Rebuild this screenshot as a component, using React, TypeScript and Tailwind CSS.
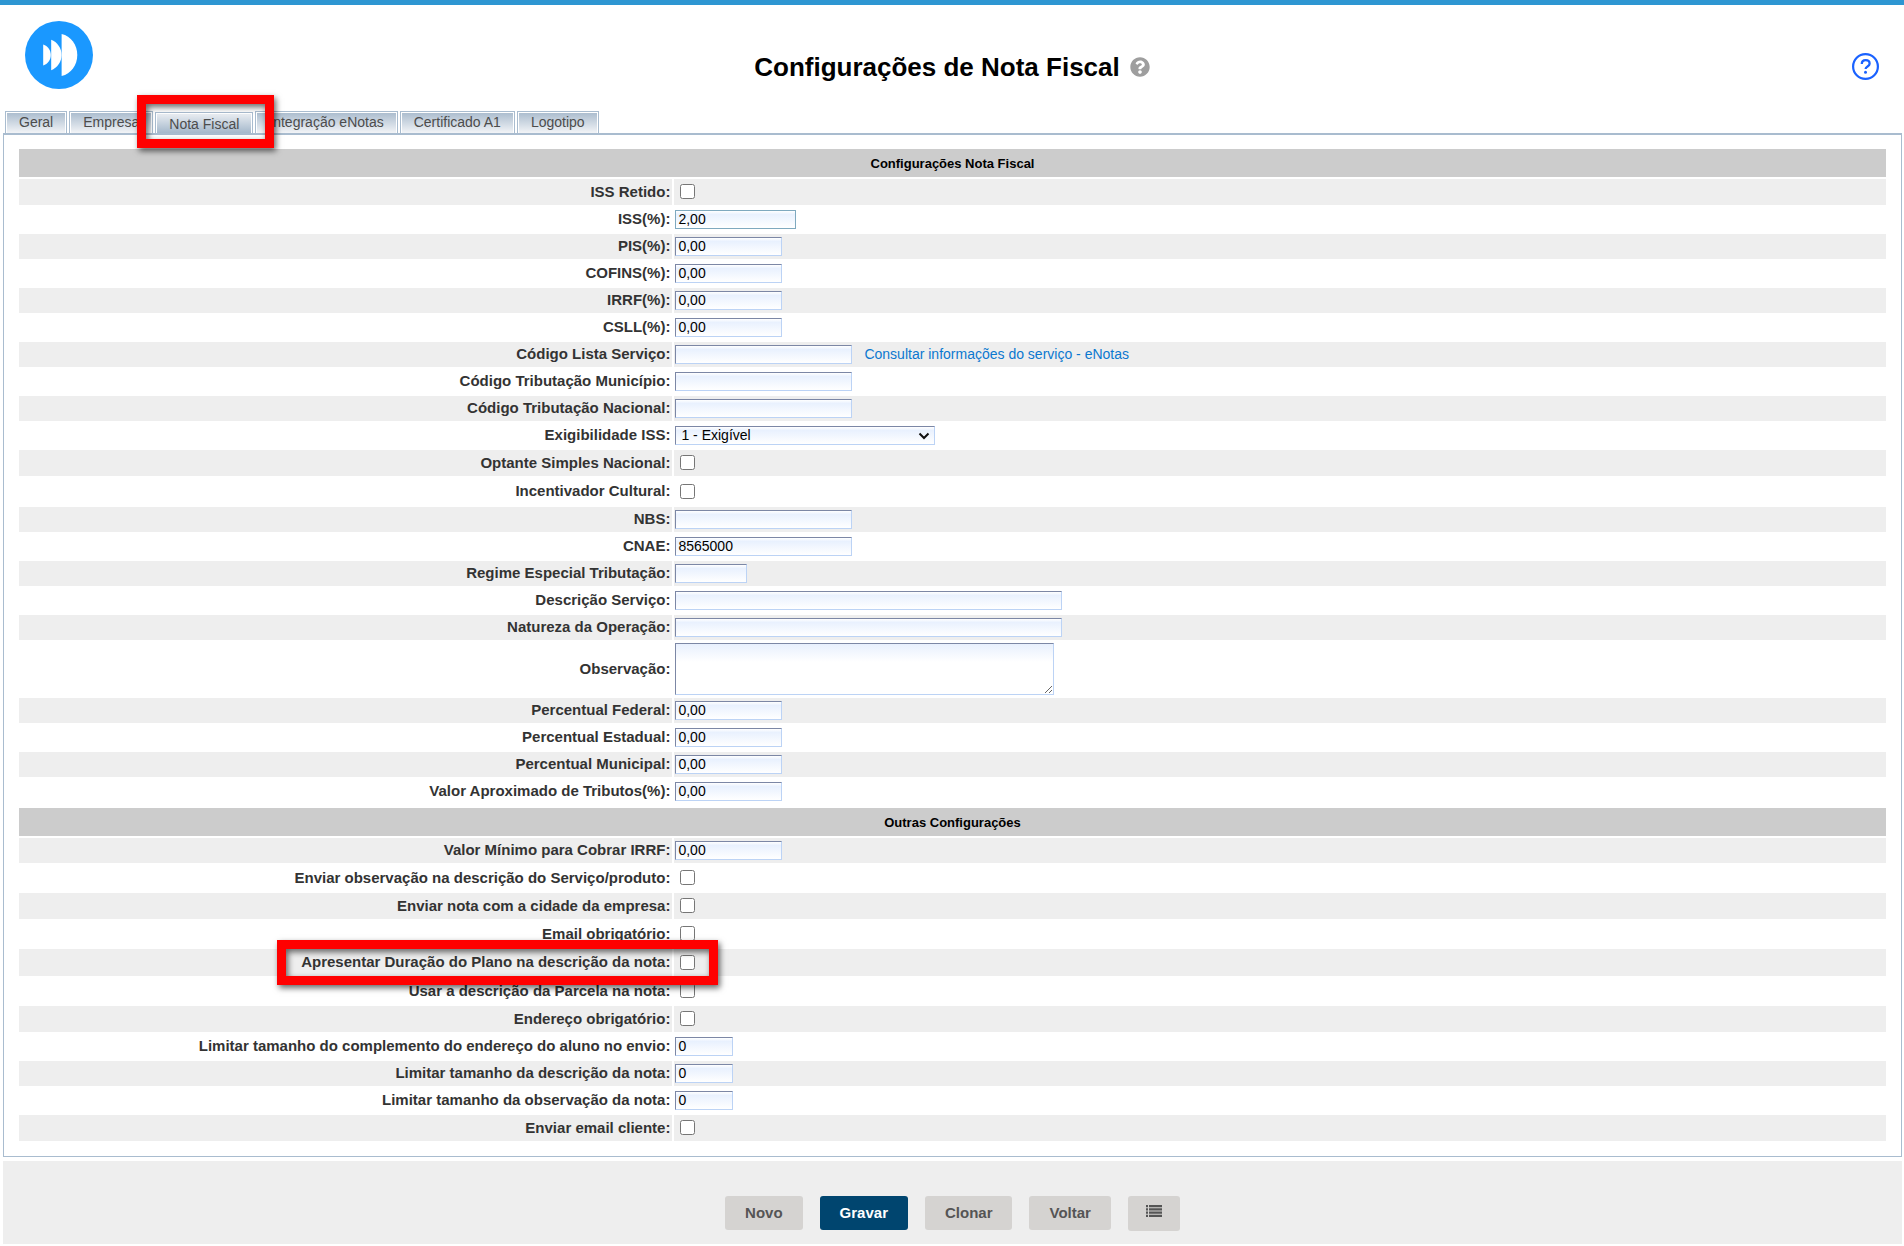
import { FaQuestionCircle } from "react-icons/fa";

interface Field {
  id: string;
  label: string;
  type: "text" | "checkbox" | "select" | "textarea";
  width?: string;
  value?: string;
  focused?: boolean;
  marked?: boolean;
  link?: string;
  rowHeight?: string;
}

const SHORT = "w-[107px]";
const MEDIUM = "w-[177px]";
const LONG = "w-[387px]";
const TINY = "w-[58px]";

const tabs = ["Geral", "Empresa", "Nota Fiscal", "Integração eNotas", "Certificado A1", "Logotipo"];

const notaFields: Field[] = [
  { id: "issRetido", label: "ISS Retido:", type: "checkbox" },
  { id: "iss", label: "ISS(%):", type: "text", width: "w-[121px]", value: "2,00", focused: true },
  { id: "pis", label: "PIS(%):", type: "text", width: SHORT, value: "0,00" },
  { id: "cofins", label: "COFINS(%):", type: "text", width: SHORT, value: "0,00" },
  { id: "irrf", label: "IRRF(%):", type: "text", width: SHORT, value: "0,00" },
  { id: "csll", label: "CSLL(%):", type: "text", width: SHORT, value: "0,00" },
  {
    id: "codigoLista",
    label: "Código Lista Serviço:",
    type: "text",
    width: MEDIUM,
    link: "Consultar informações do serviço - eNotas",
  },
  { id: "tribMunicipio", label: "Código Tributação Município:", type: "text", width: MEDIUM },
  { id: "tribNacional", label: "Código Tributação Nacional:", type: "text", width: MEDIUM },
  { id: "exigibilidade", label: "Exigibilidade ISS:", type: "select", value: "1 - Exigível" },
  { id: "simples", label: "Optante Simples Nacional:", type: "checkbox" },
  { id: "cultural", label: "Incentivador Cultural:", type: "checkbox", rowHeight: "h-[27px]" },
  { id: "nbs", label: "NBS:", type: "text", width: MEDIUM },
  { id: "cnae", label: "CNAE:", type: "text", width: MEDIUM, value: "8565000" },
  { id: "regime", label: "Regime Especial Tributação:", type: "text", width: "w-[72px]" },
  { id: "descricao", label: "Descrição Serviço:", type: "text", width: LONG },
  { id: "natureza", label: "Natureza da Operação:", type: "text", width: LONG },
  { id: "observacao", label: "Observação:", type: "textarea", rowHeight: "h-[54px]" },
  { id: "federal", label: "Percentual Federal:", type: "text", width: SHORT, value: "0,00" },
  { id: "estadual", label: "Percentual Estadual:", type: "text", width: SHORT, value: "0,00" },
  { id: "municipal", label: "Percentual Municipal:", type: "text", width: SHORT, value: "0,00" },
  { id: "tributos", label: "Valor Aproximado de Tributos(%):", type: "text", width: SHORT, value: "0,00" },
];

const outrasFields: Field[] = [
  { id: "minimoIrrf", label: "Valor Mínimo para Cobrar IRRF:", type: "text", width: SHORT, value: "0,00" },
  { id: "enviarObs", label: "Enviar observação na descrição do Serviço/produto:", type: "checkbox" },
  { id: "cidade", label: "Enviar nota com a cidade da empresa:", type: "checkbox" },
  { id: "email", label: "Email obrigatório:", type: "checkbox" },
  {
    id: "duracao",
    label: "Apresentar Duração do Plano na descrição da nota:",
    type: "checkbox",
    marked: true,
    rowHeight: "h-[27px]",
  },
  { id: "parcela", label: "Usar a descrição da Parcela na nota:", type: "checkbox" },
  { id: "endereco", label: "Endereço obrigatório:", type: "checkbox" },
  { id: "limComplemento", label: "Limitar tamanho do complemento do endereço do aluno no envio:", type: "text", width: TINY, value: "0" },
  { id: "limDescricao", label: "Limitar tamanho da descrição da nota:", type: "text", width: TINY, value: "0" },
  { id: "limObservacao", label: "Limitar tamanho da observação da nota:", type: "text", width: TINY, value: "0" },
  { id: "emailCliente", label: "Enviar email cliente:", type: "checkbox" },
];

const BOX = "border border-t-[#7c87a5] border-l-[#7c87a5] border-r-[#bcd3f5] border-b-[#bcd3f5] text-sm text-black outline-none";
const BOX_FILL = "bg-linear-to-b from-white via-[#e9f1fe] via-20% to-white";

function Logo() {
  return (
    <svg className="size-[68px]" viewBox="0 0 68 68" aria-hidden="true">
      <circle cx="34" cy="34" r="34" fill="#1a98ff" />
      <path d="M18.200 23.500c4.600 1.500 7.600 5.800 7.600 10.500s-3 9-7.600 10.500z" fill="#fff" />
      <path d="M26.200 18.800c6 2.200 10.400 8.400 10.400 15.200s-4.400 13-10.400 15.200z" fill="#fff" />
      <path d="M36.600 13c9.400 2.200 15.700 11 15.700 21s-6.300 18.800-15.700 21z" fill="#fff" />
    </svg>
  );
}

function HelpIcon() {
  return (
    <svg className="size-[27px]" viewBox="0 0 27 27" fill="none" stroke="#1a62ff" aria-hidden="true">
      <circle cx="13.500" cy="13.500" r="12.400" strokeWidth="2.200" />
      <path d="M9.800 11c0-2.300 1.600-3.800 3.900-3.800s3.900 1.400 3.900 3.500c0 2.800-4 2.700-4 5.300" strokeWidth="2.300" />
      <circle cx="13.500" cy="19.300" r="1.500" fill="#1a62ff" stroke="none" />
    </svg>
  );
}

function ListIcon() {
  return (
    <svg className="h-3 w-4" viewBox="0 0 16 12" fill="currentColor" aria-hidden="true">
      <path d="M0 0h2v2.200H0zM0 3.300h2v2.200H0zM0 6.600h2v2.200H0zM0 9.800h2V12H0z" />
      <path d="M3 0h13v2.200H3zM3 3.300h13v2.200H3zM3 6.600h13v2.200H3zM3 9.800h13V12H3z" />
    </svg>
  );
}

function Control({ field }: { field: Field }) {
  if (field.type === "checkbox") {
    return <input id={field.id} type="checkbox" className="mb-px ml-[5px] size-[15px]" />;
  }
  if (field.type === "select") {
    return (
      <div className="relative flex">
        <select id={field.id} className={`h-[19px] w-[260px] appearance-none pl-[5px] leading-[17px] ${BOX} ${BOX_FILL}`}>
          <option>{field.value}</option>
        </select>
        <svg
          className="pointer-events-none absolute top-1.5 right-[5px] h-2 w-3"
          viewBox="0 0 12 8"
          fill="none"
          stroke="#111"
          strokeWidth="2"
          aria-hidden="true"
        >
          <path d="M1.500 1.500 6 6l4.500-4.500" />
        </svg>
      </div>
    );
  }
  if (field.type === "textarea") {
    return (
      <textarea
        id={field.id}
        className={`h-[52px] w-[379px] resize bg-linear-to-b from-[#e8f0fd] to-white to-[18px] ${BOX}`}
      />
    );
  }
  return (
    <input
      id={field.id}
      type="text"
      defaultValue={field.value}
      className={`h-[19px] px-0.5 pb-0.5 ${field.width} ${BOX_FILL} ${
        field.focused ? "border border-[#7fa9bf] text-sm text-black outline-none" : BOX
      }`}
    />
  );
}

// Red frame drawn over the item it calls attention to
function Highlight({ place }: { place: string }) {
  return (
    <span
      className={`pointer-events-none absolute z-10 border-9 border-[#ff0000] shadow-[2px_3px_6px_rgba(0,0,0,0.6),inset_2px_3px_6px_rgba(0,0,0,0.6)] ${place}`}
    />
  );
}

function FieldTable({ title, fields }: { title: string; fields: Field[] }) {
  return (
    <section>
      <h2 className="flex h-7 items-center justify-center bg-[#cccccc] pt-px text-[13px] font-bold text-black">{title}</h2>
      {fields.map((field, i) => {
        const fill = i % 2 === 0 ? "bg-[#eeeeee]" : "bg-white";
        const height = field.rowHeight ?? (field.type === "checkbox" ? "h-[26px]" : "h-[25px]");
        const labelPad = field.type === "checkbox" || field.type === "textarea" ? "pb-px" : "pb-0.5";
        return (
          <div key={field.id} className={`mt-0.5 flex gap-0.5 ${height}`}>
            <div className={`flex w-[35%] items-center justify-end pr-0.5 ${labelPad} ${fill}`}>
              <div className="relative">
                <label htmlFor={field.id} className="block text-[15px] leading-5 font-bold text-[#333333]">
                  {field.label}
                </label>
                {field.marked && <Highlight place="-top-3 -right-12 -left-6 h-[45px]" />}
              </div>
            </div>
            <div className={`flex flex-1 items-center pl-px ${fill}`}>
              <Control field={field} />
              {field.link && (
                <a href="#" className="ml-3 pb-0.5 text-sm text-[#0b78d0]">
                  {field.link}
                </a>
              )}
            </div>
          </div>
        );
      })}
    </section>
  );
}

function TabBar() {
  return (
    <nav className="flex items-end gap-0.5 pl-0.5">
      {tabs.map((tab) => {
        const active = tab === "Nota Fiscal";
        return (
          <div key={tab} className="relative">
            <button
              type="button"
              className={`block border border-b-0 border-[#a9bccf] px-[13px] text-sm text-[#4c4c4c] shadow-[inset_1px_1px_0_#fff,inset_-1px_0_0_#fff] ${
                active
                  ? "h-[21px] bg-linear-to-b from-[#eceff3] to-[#a5b8cb] pt-px"
                  : "h-[22px] bg-linear-to-b from-[#a9bbcd] to-[#f2f4f7] pb-0.5"
              }`}
            >
              {tab}
            </button>
            {active && <Highlight place="-top-[17px] -right-[21px] -left-[18px] h-[53px]" />}
          </div>
        );
      })}
    </nav>
  );
}

const buttonBase = "h-[34px] rounded-[3px] px-5 text-[15px] font-bold";

export default function App() {
  return (
    <div className="border-t-5 border-[#2e96d2] bg-white font-['Liberation_Sans',Arial,sans-serif]">
      <header className="grid h-[106px] grid-cols-[1fr_auto_1fr] items-start pt-4 pr-[25px] pl-[25px]">
        <Logo />
        <div className="flex items-center gap-2.5 pt-7">
          <h1 className="text-[26px] leading-[36px] font-bold text-black">Configurações de Nota Fiscal</h1>
          <FaQuestionCircle className="size-5 text-[#9e9e9e]" />
        </div>
        <a href="#" aria-label="Ajuda" className="justify-self-end pt-8">
          <HelpIcon />
        </a>
      </header>
      <main className="mr-0.5 ml-[3px]">
        <TabBar />
        <form className="flex flex-col gap-1 border border-t-2 border-[#a9bccf] px-[15px] pt-3.5 pb-[15px]">
          <FieldTable title="Configurações Nota Fiscal" fields={notaFields} />
          <FieldTable title="Outras Configurações" fields={outrasFields} />
        </form>
        <footer className="mt-1 flex h-[83px] items-start justify-center gap-[17px] bg-[#eeeeee] pt-[35px]">
          <button type="button" className={`${buttonBase} bg-[#d5d3d1] text-[#555555]`}>
            Novo
          </button>
          <button type="button" className={`${buttonBase} bg-[#00456f] text-white`}>
            Gravar
          </button>
          <button type="button" className={`${buttonBase} bg-[#d5d3d1] text-[#555555]`}>
            Clonar
          </button>
          <button type="button" className={`${buttonBase} bg-[#d5d3d1] text-[#555555]`}>
            Voltar
          </button>
          <button
            type="button"
            aria-label="Listar"
            className="flex h-[35px] w-[52px] justify-center rounded-[3px] bg-[#d5d3d1] pt-[9px] text-[#555555]"
          >
            <ListIcon />
          </button>
        </footer>
      </main>
    </div>
  );
}
